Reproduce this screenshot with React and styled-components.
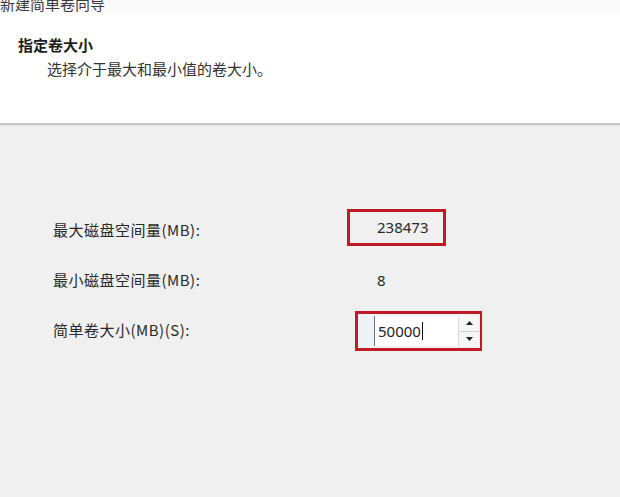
import React from "react";
import styled, { createGlobalStyle } from "styled-components";

const Global = createGlobalStyle`
  html, body { margin: 0; padding: 0; background: #f0f0f0; }
  body { font-family: "Noto Sans CJK SC", "Noto Sans", sans-serif; color: #2a2a2a; }
`;

const Window = styled.div`
  width: 620px;
  height: 497px;
  display: flex;
  flex-direction: column;
  overflow: hidden;
  background: #f0f0f0;
`;

const TitleBar = styled.div`
  height: 13px;
  flex: none;
  overflow: hidden;
  background: #fafafa;
`;

const TitleText = styled.div`
  margin-top: -5px;
  font-size: 15px;
  line-height: 18px;
  color: #3a3a3a;
`;

const Header = styled.div`
  flex: none;
  height: 110px;
  background: #ffffff;
  padding: 22px 0 0 18px;
  box-sizing: border-box;
  display: flex;
  flex-direction: column;
  gap: 4px;
`;

const Heading = styled.div`
  font-size: 15px;
  font-weight: 700;
  line-height: 20px;
  color: #1e1e1e;
`;

const Subtitle = styled.div`
  font-size: 15px;
  line-height: 20px;
  padding-left: 29px;
  color: #333;
`;

const Separator = styled.div`
  flex: none;
  height: 2px;
  background: #c6c6c6;
  border-bottom: 1px solid #e2e2e2;
`;

const Content = styled.div`
  flex: 1;
  padding: 79px 0 0 53px;
`;

const Form = styled.div`
  display: grid;
  grid-template-columns: 294px auto;
  grid-auto-rows: 50px;
  align-items: center;
`;

const Label = styled.div`
  font-size: 15px;
  line-height: 20px;
  letter-spacing: 0.5px;
  color: #2a2a2a;
`;

const Value = styled.div`
  font-family: "Noto Sans", sans-serif;
  font-size: 15px;
  line-height: 20px;
  padding-left: ${(p) => p.$indent || 30}px;
  color: #2a2a2a;
`;

const Highlight = styled.div`
  box-sizing: border-box;
  border: 3px solid #c21a24;
  width: ${(p) => p.$w}px;
  height: ${(p) => p.$h}px;
  margin-left: ${(p) => p.$offset || 0}px;
  margin-bottom: ${(p) => p.$lift || 0}px;
  display: flex;
  align-items: center;
`;

const SpinWrap = styled.div`
  flex: 1;
  align-self: stretch;
  display: flex;
  padding: 2px 1px 2px 16px;
  background: #eef2f6;
`;

const Input = styled.div`
  width: 84px;
  box-sizing: border-box;
  background: #fff;
  border-left: 1px solid #5f7386;
  display: flex;
  align-items: center;
  padding-left: 3px;
  font-family: "Noto Sans", sans-serif;
  font-size: 15px;
  color: #222;
`;

const Caret = styled.span`
  display: inline-block;
  width: 1px;
  height: 18px;
  background: #111;
  margin-left: 1px;
`;

const Spinner = styled.div`
  width: 20px;
  display: flex;
  flex-direction: column;
  background: #f6f6f6;
  border-left: 1px solid #dcdcdc;
`;

const SpinBtn = styled.div`
  flex: 1;
  display: flex;
  align-items: center;
  justify-content: center;
  border-top: ${(p) => (p.$down ? "1px solid #cfcfcf" : "none")};
`;

const Arrow = ({ down }) => (
  <svg width="7" height="4" viewBox="0 0 7 4">
    <polygon points={down ? "0,0 7,0 3.5,4" : "0,4 7,4 3.5,0"} fill="#222" />
  </svg>
);

export default function App() {
  return (
    <>
      <Global />
      <Window>
        <TitleBar>
          <TitleText>新建简单卷向导</TitleText>
        </TitleBar>
        <Header>
          <Heading>指定卷大小</Heading>
          <Subtitle>选择介于最大和最小值的卷大小。</Subtitle>
        </Header>
        <Separator />
        <Content>
          <Form>
            <Label>最大磁盘空间量(MB):</Label>
            <Highlight $w={99} $h={37} $lift={6}>
              <Value $indent={27}>238473</Value>
            </Highlight>
            <Label>最小磁盘空间量(MB):</Label>
            <Value>8</Value>
            <Label>简单卷大小(MB)(S):</Label>
            <Highlight $w={127} $h={40} $offset={8} $lift={-2}>
              <SpinWrap>
                <Input>
                  50000
                  <Caret />
                </Input>
                <Spinner>
                  <SpinBtn>
                    <Arrow />
                  </SpinBtn>
                  <SpinBtn $down>
                    <Arrow down />
                  </SpinBtn>
                </Spinner>
              </SpinWrap>
            </Highlight>
          </Form>
        </Content>
      </Window>
    </>
  );
}
